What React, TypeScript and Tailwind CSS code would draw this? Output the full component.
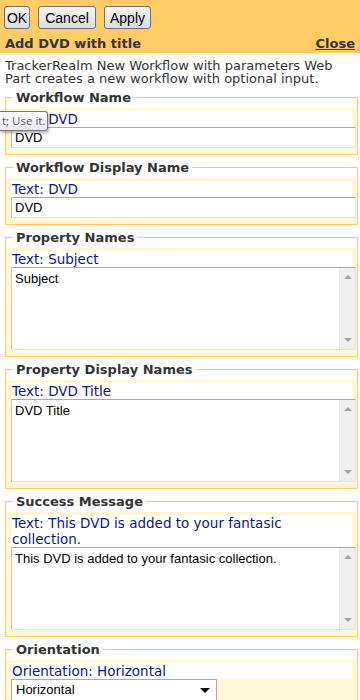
const verdana = { fontFamily: '"DejaVu Sans", Verdana, sans-serif' };
const arial = { fontFamily: '"Liberation Sans", Arial, sans-serif' };

function Btn(props: { label: string; w: string }) {
  return (
    <button
      className={`h-[23px] ${props.w} rounded-[3px] border border-[#707070] bg-gradient-to-b from-[#f6f6f6] to-[#dcdcdc] text-[14px] leading-none text-black`}
      style={arial}
    >
      {props.label}
    </button>
  );
}

function Scrollbar() {
  return (
    <div className="flex w-[16px] flex-col items-center justify-between border-l border-[#e4e4e4] bg-[#efefef] py-[7px]">
      <span className="h-0 w-0 border-x-[4px] border-b-[4px] border-x-transparent border-b-[#a3a3a3]" />
      <span className="h-0 w-0 border-x-[4px] border-t-[4px] border-x-transparent border-t-[#a3a3a3]" />
    </div>
  );
}

function Field(props: {
  legend: string;
  label: string;
  kind: "input" | "area" | "select";
  value: string;
  tip?: boolean;
}) {
  return (
    <fieldset className="mx-[5px] mt-[3px] w-[353px] border border-[#ffcc66] bg-white">
      <legend
        className="ml-[7px] px-[3px] text-[13px] font-bold leading-[19px] text-[#333]"
        style={verdana}
      >
        {props.legend}
      </legend>
      <div className="relative mt-[1px] bg-[#fff8d4] pb-[6px] pl-[5px] pt-[3px]">
        <div
          className="mr-[5px] bg-white pl-[1px] text-[13.5px] leading-[16px] text-[#12128c]"
          style={verdana}
        >
          <span className="block max-w-[300px]">{props.label}</span>
        </div>
        {props.kind === "input" && (
          <div
            className="h-[21px] w-[345px] border border-b-[#e3e3e3] border-l-[#c8c8c8] border-r-[#e3e3e3] border-t-[#a9a9a9] bg-white pl-[3px] text-[13px] leading-[19px] text-black"
            style={arial}
          >
            {props.value}
          </div>
        )}
        {props.kind === "area" && (
          <div className="flex h-[83px] w-[345px] border border-b-[#dde6f0] border-l-[#c8c8c8] border-r-[#e3e3e3] border-t-[#a9a9a9] bg-white">
            <div
              className="flex-1 pl-[3px] pt-[3px] text-[13px] leading-[16px] text-black"
              style={arial}
            >
              {props.value}
            </div>
            <Scrollbar />
          </div>
        )}
        {props.kind === "select" && (
          <div
            className="flex h-[22px] w-[206px] items-center justify-between border border-[#a9a9a9] bg-white pl-[4px] pr-[6px] text-[13px] text-black"
            style={arial}
          >
            <span>{props.value}</span>
            <span className="h-0 w-0 border-x-[5px] border-t-[5px] border-x-transparent border-t-black" />
          </div>
        )}
        {props.tip && (
          <div
            className="absolute left-[-6px] top-[3px] flex h-[20px] w-[48px] items-center whitespace-nowrap rounded-r-[3px] border border-l-0 border-[#767676] bg-gradient-to-b from-white to-[#e8e8ef] pl-[2px] text-[11.5px] text-[#575757] shadow-[1px_2px_3px_rgba(0,0,0,0.3)]"
            style={{ fontFamily: '"Open Sans", "DejaVu Sans", sans-serif' }}
          >
            t; Use it.
          </div>
        )}
      </div>
    </fieldset>
  );
}

export default function App() {
  return (
    <div className="h-[700px] w-[360px] overflow-hidden bg-white">
      <div className="h-[53px] bg-[#ffcc66] px-[4px] pt-[6px]">
        <div className="flex gap-[8px]">
          <Btn label="OK" w="w-[26px]" />
          <Btn label="Cancel" w="w-[58px]" />
          <Btn label="Apply" w="w-[47px]" />
        </div>
        <div
          className="mt-[7px] flex items-end justify-between pl-[1px] pr-[1px] text-[13px] font-bold leading-[16px] text-[#333]"
          style={verdana}
        >
          <span>Add DVD with title</span>
          <span className="underline">Close</span>
        </div>
      </div>
      <p
        className="px-[5px] pt-[6px] text-[13px] leading-[13px] text-[#333]"
        style={verdana}
      >
        TrackerRealm New Workflow with parameters Web Part creates a new workflow with optional input.
      </p>
      <Field legend="Workflow Name" label="Text: DVD" kind="input" value="DVD" tip />
      <Field legend="Workflow Display Name" label="Text: DVD" kind="input" value="DVD" />
      <Field legend="Property Names" label="Text: Subject" kind="area" value="Subject" />
      <Field legend="Property Display Names" label="Text: DVD Title" kind="area" value="DVD Title" />
      <Field
        legend="Success Message"
        label="Text: This DVD is added to your fantasic collection."
        kind="area"
        value="This DVD is added to your fantasic collection."
      />
      <Field legend="Orientation" label="Orientation: Horizontal" kind="select" value="Horizontal" />
    </div>
  );
}
